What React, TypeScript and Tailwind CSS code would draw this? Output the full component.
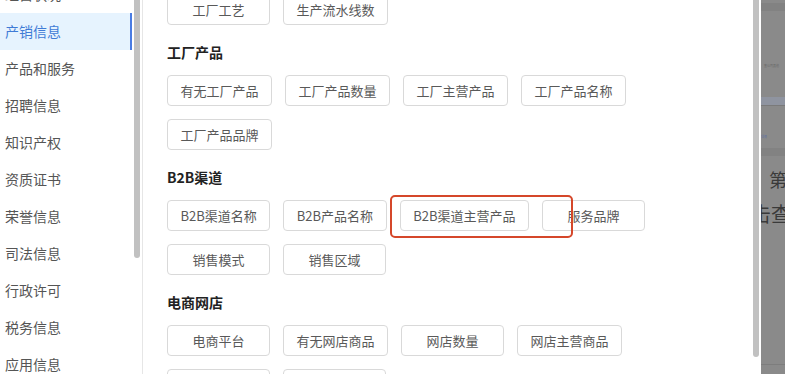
import React from "react";

const sideItems = [
  "经营状况",
  "产销信息",
  "产品和服务",
  "招聘信息",
  "知识产权",
  "资质证书",
  "荣誉信息",
  "司法信息",
  "行政许可",
  "税务信息",
  "应用信息",
];

const sections: { title?: string; items: string[] }[] = [
  { items: ["工厂工艺", "生产流水线数"] },
  {
    title: "工厂产品",
    items: ["有无工厂产品", "工厂产品数量", "工厂主营产品", "工厂产品名称", "工厂产品品牌"],
  },
  {
    title: "B2B渠道",
    items: ["B2B渠道名称", "B2B产品名称", "B2B渠道主营产品", "服务品牌", "销售模式", "销售区域"],
  },
  {
    title: "电商网店",
    items: ["电商平台", "有无网店商品", "网店数量", "网店主营商品", "网店品牌", "网店名称"],
  },
];

const Tag: React.FC<{ label: string }> = ({ label }) => (
  <div className="h-[31px] min-w-[103px] px-[12.5px] flex items-center justify-center border border-[#d9d9d9] rounded-[4px] text-[13px] text-[#595959] bg-white whitespace-nowrap">
    {label}
  </div>
);

export default function App() {
  return (
    <div
      className="w-[785px] h-[374px] overflow-hidden flex bg-white"
      style={{ fontFamily: '"Noto Sans CJK SC", "Noto Sans", sans-serif' }}
    >
      {/* Sidebar */}
      <div className="w-[143px] shrink-0 flex border-r border-[#e6e6e6]">
        <div className="w-[132px] -mt-[24px]">
          {sideItems.map((s) => {
            const active = s === "产销信息";
            return (
              <div
                key={s}
                className={
                  active
                    ? "h-[37px] flex items-center pl-[5px] text-[14px] text-[#3f7bd6] bg-[#e6f3fe] border-r-[2px] border-[#4a7ce3]"
                    : "h-[37px] flex items-center pl-[5px] text-[14px] text-[#555]"
                }
              >
                {s}
              </div>
            );
          })}
        </div>
        <div className="ml-[2px] w-[6px] h-[258px] rounded-b-full bg-[#c1c1c1]" />
      </div>

      {/* Main panel */}
      <div className="w-[618px] shrink-0 flex relative">
        <div className="flex-1 pl-[24px] overflow-hidden">
          <div className="-mt-[6px]">
            {sections.map((sec, i) => (
              <div key={i}>
                {sec.title && (
                  <div className="pt-[17px] pb-[13px] leading-[20px] text-[14px] font-bold text-[#222]">
                    {sec.title}
                  </div>
                )}
                <div className="flex flex-wrap gap-[13px] w-[500px]">
                  {sec.items.map((it) => (
                    <Tag key={it} label={it} />
                  ))}
                </div>
              </div>
            ))}
          </div>
        </div>
        <div className="w-[6px] h-[357px] mr-[2px] rounded-b-full bg-[#c1c1c1]" />

        {/* annotation */}
        <div className="absolute left-[247px] top-[195px] w-[183px] h-[43px] border-[2.5px] border-[#d5472a] rounded-[5px]" />
      </div>

      {/* dimmed page behind */}
      <div className="flex-1 bg-[#8a8a8a] flex flex-col overflow-hidden">
        <div className="h-[3px]" />
        <div className="h-[8px] bg-[#828282]" />
        <div className="h-[52px]" />
        <div className="text-[3px] text-[#666] pl-[3px] leading-[6px]">查公司其他</div>
        <div className="h-[28px]" />
        <div className="h-[8px] bg-[#8f94a0]" />
        <div className="h-[1px] bg-[#7a7a7a]" />
        <div className="h-[28px]" />
        <div className="text-[3px] text-[#6070a0] leading-[6px]">详情</div>
        <div className="h-[8px]" />
        <div className="h-[8px] bg-[#828282]" />
        <div className="h-[12px]" />
        <div className="text-[18px] leading-[22px] text-[#3a3a3a] pl-[8px] whitespace-nowrap">第</div>
        <div className="h-[12px]" />
        <div className="text-[20px] leading-[24px] text-[#3a3a3a] -ml-[10px] whitespace-nowrap">击查</div>
        <div className="flex-1" />
        <div className="h-[1px] bg-[#7d7d7d] mb-[9px]" />
      </div>
    </div>
  );
}
